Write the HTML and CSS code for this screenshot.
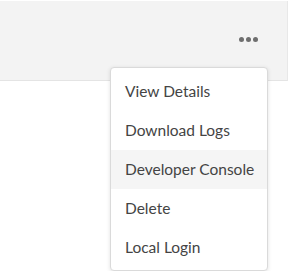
FILE: index.html
```html
<!DOCTYPE html>
<html lang="en">

<head>
  <meta charset="UTF-8" />
  <title>Actions Menu</title>
  <link rel="stylesheet" href="styles.css">
</head>

<body>

  <div class="toolbar">
    <button class="more-btn" aria-label="More actions">
      <span class="dot"></span><span class="dot"></span><span class="dot"></span>
    </button>
  </div>

  <ul class="action-menu">
    <li class="menu-item">View Details</li>
    <li class="menu-item">Download Logs</li>
    <li class="menu-item is-hover">Developer Console</li>
    <li class="menu-item">Delete</li>
    <li class="menu-item">Local Login</li>
  </ul>

</body>

</html>
```

FILE: styles.css
```css
body {
  margin: 0;
  background: #fff;
  font-family: Lato, "Open Sans", sans-serif;
  position: relative;
  height: 271px;
  overflow: hidden;
}

.toolbar {
  margin-top: 1px;
  width: 287px;
  height: 79px;
  background: #f3f3f3;
  border-right: 1px solid #e8e8e8;
  border-bottom: 1px solid #e4e4e4;
  display: flex;
  justify-content: flex-end;
  align-items: flex-start;
}

.more-btn {
  margin: 36px 29px 0 0;
  padding: 0;
  border: 0;
  background: none;
  display: flex;
  gap: 2px;
}

.dot {
  width: 5px;
  height: 5px;
  border-radius: 50%;
  background: #6e6e6e;
}

.action-menu {
  position: absolute;
  left: 110px;
  top: 67px;
  width: 156px;
  height: 198px;
  margin: 0;
  padding: 4px 0 0;
  list-style: none;
  background: #fff;
  border: 1px solid #dadada;
  border-radius: 4px;
  box-shadow: 0 1px 4px rgba(0, 0, 0, 0.12);
  overflow: hidden;
}

.menu-item {
  height: 39px;
  line-height: 39px;
  padding-left: 14px;
  font-size: 15.5px;
  color: #444;
}

.menu-item.is-hover {
  background: #f5f5f5;
}
```
